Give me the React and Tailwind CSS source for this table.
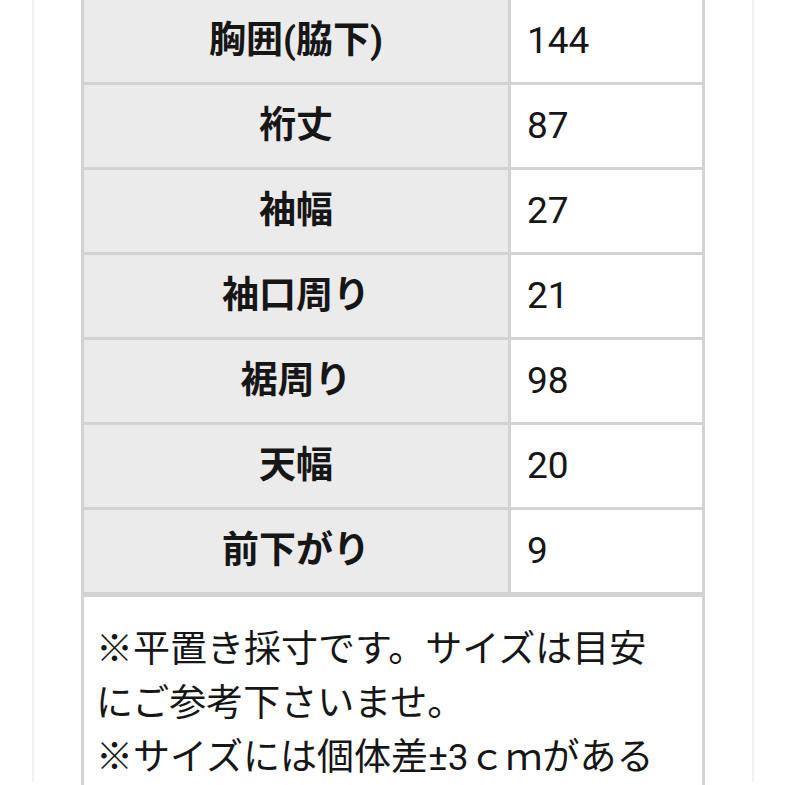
import React from "react";

const rows = [
  ["胸囲(脇下)", "144"],
  ["裄丈", "87"],
  ["袖幅", "27"],
  ["袖口周り", "21"],
  ["裾周り", "98"],
  ["天幅", "20"],
  ["前下がり", "9"],
];

export default function App() {
  return (
    <div
      className="h-[785px] overflow-hidden bg-white text-[#161616]"
      style={{ fontFamily: "Roboto, 'Noto Sans CJK JP', sans-serif" }}
    >
      <div className="ml-[32px] w-[722px] h-full border-x-2 border-[#f2f2f2] px-[47px]">
        {/* size table */}
        <div className="-mt-[3px] grid grid-cols-[424px_191px] gap-[3px] bg-[#d3d3d3] p-[3px]">
          {rows.map(([label, value]) => (
            <React.Fragment key={label}>
              <div className="h-[82px] bg-[#ebebeb] flex items-center justify-center text-[37px] font-bold">
                {label}
              </div>
              <div className="h-[82px] bg-white flex items-center pl-[16px] text-[37px]">
                {value}
              </div>
            </React.Fragment>
          ))}
          <div className="col-span-2 mt-[2px] bg-white pl-[12px] pt-[26px] pb-[20px] text-[37px] leading-[54px]">
            ※平置き採寸です。サイズは目安
            <br />
            にご参考下さいませ。
            <br />
            ※サイズには個体差±3ｃｍがある
          </div>
        </div>
      </div>
    </div>
  );
}
